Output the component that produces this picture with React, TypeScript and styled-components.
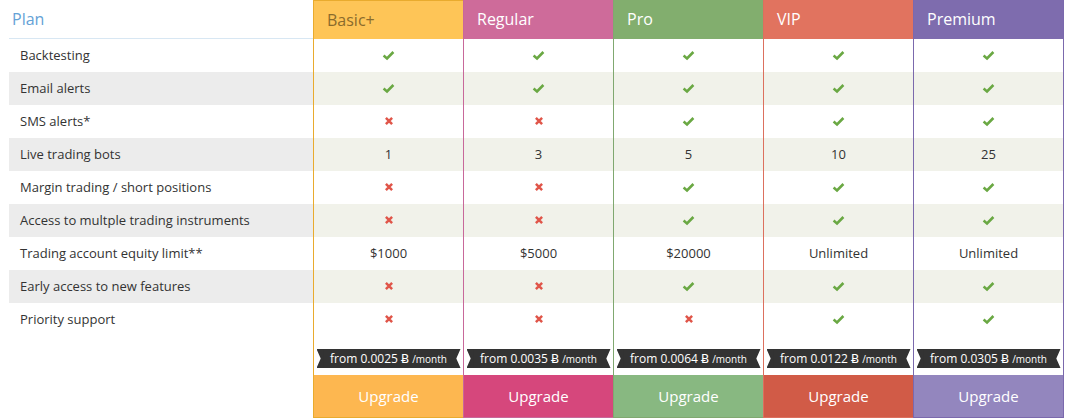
import React from "react";
import styled, { createGlobalStyle } from "styled-components";

const Global = createGlobalStyle`
  html, body { margin: 0; padding: 0; background: #fff; }
  body { font-family: "Open Sans", "DejaVu Sans", sans-serif; color: #333; }
`;

type Val = boolean | string;

interface Plan {
  name: string;
  head: string;
  border: string;
  text: string;
  btn: string;
  price: string;
  top?: boolean;
  values: Val[];
}

const features = [
  "Backtesting",
  "Email alerts",
  "SMS alerts*",
  "Live trading bots",
  "Margin trading / short positions",
  "Access to multple trading instruments",
  "Trading account equity limit**",
  "Early access to new features",
  "Priority support",
];

const plans: Plan[] = [
  {
    name: "Basic+",
    head: "#fec557",
    border: "#e9ab2e",
    text: "#8a6b2c",
    btn: "#fdb750",
    price: "0.0025",
    top: true,
    values: [true, true, false, "1", false, false, "$1000", false, false],
  },
  {
    name: "Regular",
    head: "#ce6b9a",
    border: "#c8689a",
    text: "#fff",
    btn: "#d6477c",
    price: "0.0035",
    values: [true, true, false, "3", false, false, "$5000", false, false],
  },
  {
    name: "Pro",
    head: "#82ae6e",
    border: "#80a870",
    text: "#fff",
    btn: "#88b881",
    price: "0.0064",
    values: [true, true, true, "5", true, true, "$20000", true, false],
  },
  {
    name: "VIP",
    head: "#e1735f",
    border: "#dc705e",
    text: "#fff",
    btn: "#d15b47",
    price: "0.0122",
    values: [true, true, true, "10", true, true, "Unlimited", true, true],
  },
  {
    name: "Premium",
    head: "#7e6cae",
    border: "#7b69ad",
    text: "#fff",
    btn: "#9386be",
    price: "0.0305",
    values: [true, true, true, "25", true, true, "Unlimited", true, true],
  },
];

const Table = styled.div`
  display: flex;
  padding-left: 9px;
  width: 1066px;
  box-sizing: border-box;
`;

const LabelCol = styled.div`
  width: 304px;
  display: flex;
  flex-direction: column;
`;

const PlanHeader = styled.div`
  height: 37px;
  border-bottom: 1px solid #d8e7f3;
  color: #64a2d6;
  font-size: 16px;
  display: flex;
  align-items: center;
  padding-left: 3px;
  padding-bottom: 1px;
`;

const LabelRow = styled.div<{ $odd: boolean }>`
  height: 33px;
  display: flex;
  align-items: center;
  padding-left: 11px;
  padding-bottom: 1px;
  box-sizing: border-box;
  font-size: 13px;
  color: #333;
  background: ${(p) => (p.$odd ? "#ececec" : "#fff")};
`;

const Column = styled.div<{ $border: string; $top?: boolean; $last?: boolean }>`
  width: ${(p) => (p.$last ? "151px" : "150px")};
  box-sizing: border-box;
  display: flex;
  flex-direction: column;
  border-left: 1px solid ${(p) => p.$border};
  border-right: ${(p) => (p.$last ? `1px solid ${p.$border}` : "none")};
  border-bottom: 1px solid ${(p) => p.$border};
  border-top: ${(p) => (p.$top ? `1px solid ${p.$border}` : "none")};
`;

const Head = styled.div<{ $bg: string; $fg: string; $top?: boolean }>`
  height: ${(p) => (p.$top ? "38px" : "39px")};
  box-sizing: border-box;
  padding-bottom: ${(p) => (p.$top ? "0" : "1px")};
  background: ${(p) => p.$bg};
  color: ${(p) => p.$fg};
  font-size: 16px;
  display: flex;
  align-items: center;
  padding-left: 13px;
`;

const Cell = styled.div<{ $odd: boolean }>`
  height: 33px;
  box-sizing: border-box;
  padding-bottom: 1px;
  display: flex;
  align-items: center;
  justify-content: center;
  font-size: 13px;
  color: #333;
  background: ${(p) => (p.$odd ? "#f1f2ea" : "#fff")};
`;

const PriceCell = styled.div`
  height: 39px;
  display: flex;
  justify-content: center;
  align-items: flex-start;
  padding-top: 13px;
  box-sizing: border-box;
`;

const Ribbon = styled.div`
  position: relative;
  height: 19px;
  width: 132px;
  background: #333;
  color: #fff;
  font-size: 12px;
  display: flex;
  align-items: center;
  justify-content: center;
  white-space: nowrap;
  &::before,
  &::after {
    content: "";
    position: absolute;
    top: 0;
    width: 7px;
    height: 19px;
    background: #333;
  }
  &::before {
    left: -6px;
    clip-path: polygon(0 0, 100% 0, 100% 100%, 0 100%, 60% 50%);
  }
  &::after {
    right: -6px;
    clip-path: polygon(0 0, 100% 0, 40% 50%, 100% 100%, 0 100%);
  }
`;

const Coin = styled.span`
  font-family: "DejaVu Sans", sans-serif;
  font-size: 12px;
  margin: 0 3px 0 3px;
`;

const Per = styled.span`
  font-size: 10px;
`;

const Button = styled.button<{ $bg: string }>`
  height: 42px;
  border: none;
  margin: 0;
  background: ${(p) => p.$bg};
  color: #fff;
  font-family: "Open Sans", sans-serif;
  font-size: 15px;
  cursor: pointer;
  padding: 0;
`;

const Check = () => (
  <svg width="13" height="11" viewBox="0 0 13 11">
    <path d="M1.6 5.6 L5 8.4 L11.4 2" fill="none" stroke="#6aa843" strokeWidth="2.6" strokeLinejoin="miter" />
  </svg>
);

const Cross = () => (
  <svg width="10" height="10" viewBox="0 0 10 10">
    <path d="M1.9 1.9 L8.1 8.1 M8.1 1.9 L1.9 8.1" fill="none" stroke="#e05549" strokeWidth="2.5" />
  </svg>
);

const renderVal = (v: Val) => (v === true ? <Check /> : v === false ? <Cross /> : v);

export default function App() {
  return (
    <>
      <Global />
      <Table>
        <LabelCol>
          <PlanHeader>Plan</PlanHeader>
          {features.map((f, i) => (
            <LabelRow key={f} $odd={i % 2 === 1}>
              {f}
            </LabelRow>
          ))}
        </LabelCol>
        {plans.map((p, pi) => (
          <Column key={p.name} $border={p.border} $top={p.top} $last={pi === plans.length - 1}>
            <Head $bg={p.head} $fg={p.text} $top={p.top}>
              {p.name}
            </Head>
            {p.values.map((v, i) => (
              <Cell key={i} $odd={i % 2 === 1}>
                {renderVal(v)}
              </Cell>
            ))}
            <PriceCell>
              <Ribbon>
                from {p.price}
                <Coin>Ƀ</Coin>
                <Per>/month</Per>
              </Ribbon>
            </PriceCell>
            <Button $bg={p.btn}>Upgrade</Button>
          </Column>
        ))}
      </Table>
    </>
  );
}
